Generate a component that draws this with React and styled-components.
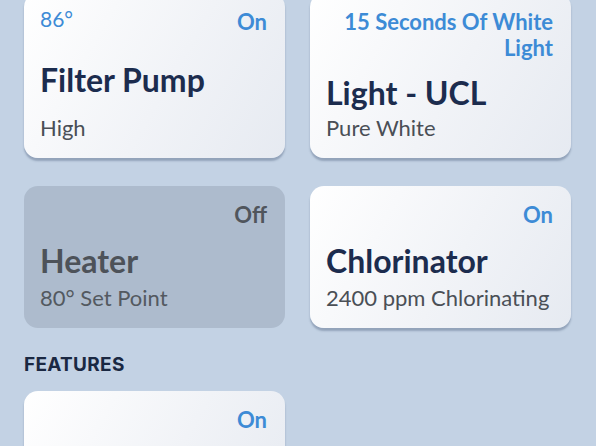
import React from "react";
import styled, { createGlobalStyle } from "styled-components";

const devices = [
  { id: "pump", status: "On", detail: "86°", name: "Filter Pump", sub: "High", on: true },
  { id: "light", status: "15 Seconds Of White Light", name: "Light - UCL", sub: "Pure White", on: true },
  { id: "heater", status: "Off", name: "Heater", sub: "80° Set Point", on: false },
  { id: "chlor", status: "On", name: "Chlorinator", sub: "2400 ppm Chlorinating", on: true },
];

const GlobalStyle = createGlobalStyle`
  html, body {
    margin: 0;
    padding: 0;
    background: #c3d2e4;
    font-family: Lato, "Noto Sans", sans-serif;
    overflow: hidden;
  }
`;

const Page = styled.main`
  width: 596px;
  height: 446px;
  padding: 0 25px 0 24px;
  box-sizing: border-box;
  background: #c3d2e4;
  overflow: hidden;
`;

const Grid = styled.section`
  display: grid;
  grid-template-columns: 1fr 1fr;
  grid-template-rows: ${(p) => p.$rows};
  column-gap: 25px;
  row-gap: 28px;
  margin-top: ${(p) => p.$top || 0}px;
`;

const Card = styled.div`
  display: grid;
  grid-template-rows: auto 1fr auto;
  border-radius: 14px;
  padding: 16px 18px 17px 16px;
  box-sizing: border-box;
  background: ${(p) =>
    p.$on ? "linear-gradient(120deg, #ffffff 0%, #f1f3f7 55%, #e6eaf1 100%)" : "#adbbcd"};
  box-shadow: ${(p) => (p.$on ? "0 3px 2px rgba(88, 106, 135, 0.45)" : "none")};
`;

const TopRow = styled.div`
  display: flex;
  justify-content: space-between;
  align-items: flex-start;
  gap: 12px;
`;

const Detail = styled.span`
  font-size: 21px;
  line-height: 26px;
  color: #3d8bd6;
  margin-top: -3px;
`;

const Status = styled.span`
  margin-left: auto;
  font-size: 22px;
  font-weight: 700;
  line-height: 26px;
  text-align: right;
  color: ${(p) => (p.$on ? "#3d8bd6" : "#50555c")};
`;

const Title = styled.h2`
  align-self: center;
  margin: 0;
  padding-top: 9px;
  font-size: 32px;
  font-weight: 700;
  line-height: 38px;
  color: ${(p) => (p.$on ? "#1c2c4e" : "#4d5259")};
`;

const Sub = styled.p`
  margin: 0;
  font-size: 22px;
  line-height: 26px;
  color: ${(p) => (p.$on ? "#4a4f56" : "#535960")};
`;

const Heading = styled.h3`
  margin: 26px 0 15px;
  font-family: Inter, "Noto Sans", sans-serif;
  font-size: 19px;
  font-weight: 700;
  letter-spacing: 0.3px;
  line-height: 22px;
  color: #1a2842;
`;

const DeviceCard = ({ d }) => (
  <Card $on={d.on}>
    <TopRow>
      {d.detail && <Detail>{d.detail}</Detail>}
      <Status $on={d.on}>{d.status}</Status>
    </TopRow>
    <Title $on={d.on}>{d.name}</Title>
    {d.sub ? <Sub $on={d.on}>{d.sub}</Sub> : <span />}
  </Card>
);

export default function App() {
  return (
    <>
      <GlobalStyle />
      <Page>
        <Grid $rows="165px 142px" $top={-7}>
          {devices.map((d) => (
            <DeviceCard key={d.id} d={d} />
          ))}
        </Grid>
        <Heading>FEATURES</Heading>
        <Grid $rows="142px">
          <DeviceCard d={{ id: "feat", status: "On", name: "", sub: "", on: true }} />
        </Grid>
      </Page>
    </>
  );
}
